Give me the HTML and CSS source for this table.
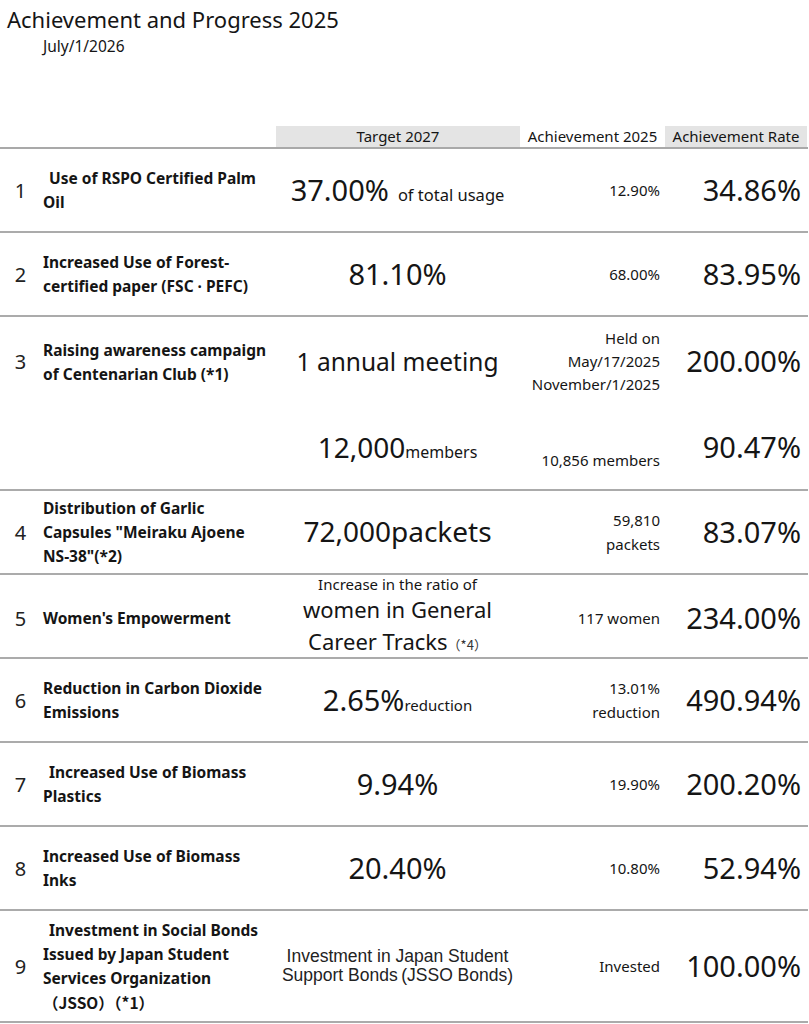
FILE: index.html
```html
<!DOCTYPE html>
<html lang="en">
<head>
<meta charset="utf-8">
<title>Achievement and Progress 2025</title>
<link rel="stylesheet" href="styles.css">
</head>
<body>
<h1 class="title">Achievement and Progress 2025</h1>
<div class="date">July/1/2026</div>

<div class="table">
  <div class="head">
    <div></div>
    <div class="hcell gray">Target 2027</div>
    <div class="hcell">Achievement 2025</div>
    <div class="hcell gray rate-h">Achievement Rate</div>
  </div>

  <div class="row">
    <div class="num">1</div>
    <div class="label indent">Use of RSPO Certified Palm<br>Oil</div>
    <div class="target"><span class="big">37.00%</span><span class="unit spaced">of total usage</span></div>
    <div class="ach">12.90%</div>
    <div class="rate">34.86%</div>
  </div>

  <div class="row">
    <div class="num">2</div>
    <div class="label">Increased Use of Forest-<br>certified paper (FSC · PEFC)</div>
    <div class="target"><span class="big">81.10%</span></div>
    <div class="ach">68.00%</div>
    <div class="rate">83.95%</div>
  </div>

  <div class="row tall">
    <div class="num">3</div>
    <div class="label">Raising awareness campaign<br>of Centenarian Club (*1)</div>
    <div class="target"><span class="mid">1 annual meeting</span></div>
    <div class="ach lines3">Held on<br>May/17/2025<br>November/1/2025</div>
    <div class="rate">200.00%</div>
    <div class="target sub"><span class="big2">12,000</span><span class="unit">members</span></div>
    <div class="ach sub low">10,856 members</div>
    <div class="rate sub">90.47%</div>
  </div>

  <div class="row">
    <div class="num">4</div>
    <div class="label">Distribution of Garlic<br>Capsules "Meiraku Ajoene<br>NS-38"(*2)</div>
    <div class="target"><span class="big2">72,000packets</span></div>
    <div class="ach">59,810<br>packets</div>
    <div class="rate">83.07%</div>
  </div>

  <div class="row">
    <div class="num">5</div>
    <div class="label">Women's Empowerment</div>
    <div class="target stack">
      <div class="small-line">Increase in the ratio of</div>
      <div class="wide-line">women in General</div>
      <div class="wide-line">Career Tracks<span class="note cjk">（*4）</span></div>
    </div>
    <div class="ach">117 women</div>
    <div class="rate">234.00%</div>
  </div>

  <div class="row">
    <div class="num">6</div>
    <div class="label">Reduction in Carbon Dioxide<br>Emissions</div>
    <div class="target"><span class="big">2.65%</span><span class="unit small">reduction</span></div>
    <div class="ach">13.01%<br>reduction</div>
    <div class="rate">490.94%</div>
  </div>

  <div class="row">
    <div class="num">7</div>
    <div class="label indent">Increased Use of Biomass<br>Plastics</div>
    <div class="target"><span class="big">9.94%</span></div>
    <div class="ach">19.90%</div>
    <div class="rate">200.20%</div>
  </div>

  <div class="row">
    <div class="num">8</div>
    <div class="label">Increased Use of Biomass<br>Inks</div>
    <div class="target"><span class="big">20.40%</span></div>
    <div class="ach">10.80%</div>
    <div class="rate">52.94%</div>
  </div>

  <div class="row last">
    <div class="num">9</div>
    <div class="label indent">Investment in Social Bonds<br>Issued by Japan Student<br>Services Organization<br><span class="cjk">（JSSO）（*1）</span></div>
    <div class="target bonds"><div>Investment in Japan Student</div><div>Support Bonds&#8201;(JSSO Bonds)</div></div>
    <div class="ach">Invested</div>
    <div class="rate">100.00%</div>
  </div>
</div>
</body>
</html>
```

FILE: styles.css
```css
html, body {
  margin: 0;
  padding: 0;
  background: #ffffff;
}

body {
  font-family: "Noto Sans", "Noto Sans CJK JP", sans-serif;
  color: #151515;
  width: 809px;
}

.title {
  margin: 0;
  padding: 4px 0 0 7px;
  font-size: 22px;
  line-height: 30px;
  font-weight: 400;
}

.date {
  padding: 2px 0 0 43px;
  font-size: 15.5px;
  line-height: 21px;
}

.table {
  margin-top: 69px;
  width: 808px;
}

.head {
  display: grid;
  grid-template-columns: 275px 244px 1fr 143px;
  column-gap: 1px;
  height: 23px;
  box-sizing: border-box;
  border-bottom: 2px solid #a9a9a9;
}

.hcell {
  font-size: 15px;
  line-height: 21px;
  text-align: center;
  white-space: nowrap;
}

.gray {
  background: #e4e4e4;
}

.rate-h {
  margin-right: 1px;
}

.row {
  display: grid;
  grid-template-columns: 43px 232px 245px 143px 145px;
  align-items: center;
  height: 84px;
  box-sizing: border-box;
  border-bottom: 2px solid #ababab;
}

.row.tall {
  height: 174px;
  grid-template-rows: 89px 83px;
}

.row.last {
  height: 112px;
}

.sub {
  grid-row: 2;
}

.target.sub {
  grid-column: 3;
}

.ach.sub {
  grid-column: 4;
}

.rate.sub {
  grid-column: 5;
}

.num {
  font-size: 20px;
  text-align: center;
  padding-right: 2px;
  color: #222;
}

.label {
  font-size: 15.5px;
  font-weight: 700;
  line-height: 24px;
  white-space: nowrap;
}

.indent {
  text-indent: 6px;
}

.cjk {
  font-family: "Noto Sans CJK JP", sans-serif;
}

.target {
  text-align: center;
  white-space: nowrap;
  line-height: 1.2;
}

.big {
  font-size: 29px;
}

.big2 {
  font-size: 28px;
}

.mid {
  font-size: 24.5px;
}

.unit {
  font-size: 16px;
}

.unit.spaced {
  margin-left: 9px;
  font-size: 16.5px;
}

.unit.small {
  font-size: 15px;
}

.stack {
  align-self: stretch;
  display: flex;
  flex-direction: column;
  justify-content: center;
}

.small-line {
  font-size: 15px;
  line-height: 18px;
}

.wide-line {
  font-size: 22px;
  line-height: 32px;
}

.note {
  font-size: 13px;
  color: #333;
}

.bonds {
  font-family: "Liberation Sans", "Noto Sans", sans-serif;
  font-size: 17.5px;
  line-height: 19.5px;
  color: #222;
}

.ach {
  text-align: right;
  padding-right: 3px;
  font-size: 15px;
  line-height: 24px;
  white-space: nowrap;
}

.ach.lines3 {
  line-height: 23px;
}

.ach.low {
  align-self: end;
  padding-bottom: 17px;
}

.rate {
  text-align: right;
  padding-right: 7px;
  font-size: 29px;
  line-height: 1.2;
  white-space: nowrap;
}
```
